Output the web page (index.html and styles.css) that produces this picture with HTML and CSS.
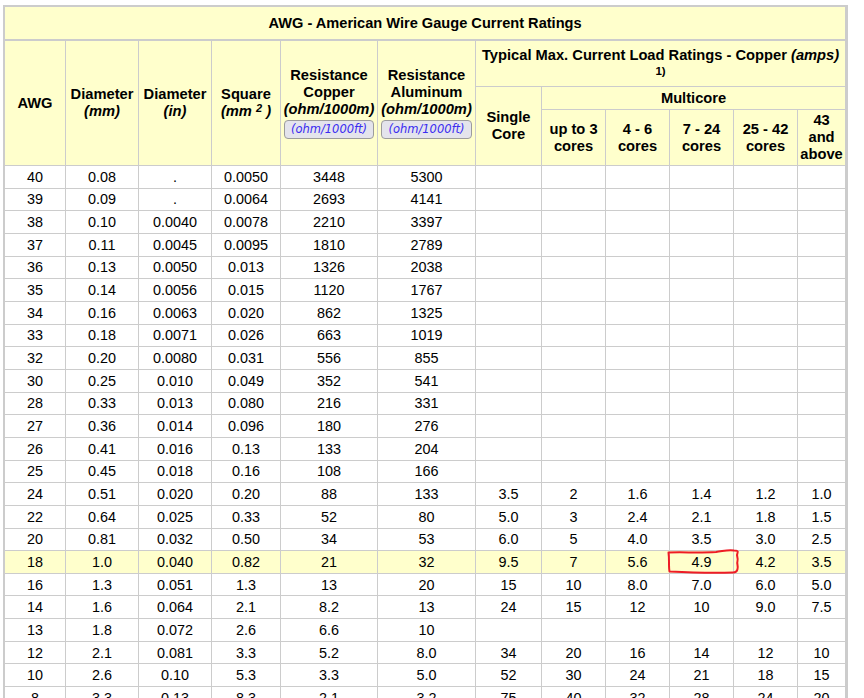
FILE: index.html
```html
<!DOCTYPE html>
<html lang="en">
<head>
<meta charset="utf-8">
<title>AWG - American Wire Gauge Current Ratings</title>
<link rel="stylesheet" href="styles.css">
</head>
<body>
<div class="page">
<table class="awg">
  <colgroup>
    <col class="c1"><col class="c2"><col class="c3"><col class="c4"><col class="c5"><col class="c6">
    <col class="c7"><col class="c8"><col class="c9"><col class="c10"><col class="c11"><col class="c12">
  </colgroup>
  <thead>
    <tr class="r-title"><th colspan="12" class="title">AWG - American Wire Gauge Current Ratings</th></tr>
    <tr class="r-a">
      <th rowspan="3">AWG</th>
      <th rowspan="3">Diameter<br><i>(mm)</i></th>
      <th rowspan="3">Diameter<br><i>(in)</i></th>
      <th rowspan="3">Square<br><i>(mm <sup>2</sup> )</i></th>
      <th rowspan="3">Resistance<br>Copper<br><i>(ohm/1000m)</i><br><span class="unit-btn">(ohm/1000ft)</span></th>
      <th rowspan="3">Resistance<br>Aluminum<br><i>(ohm/1000m)</i><br><span class="unit-btn">(ohm/1000ft)</span></th>
      <th colspan="6">Typical Max. Current Load Ratings - Copper <i>(amps)</i><br><sup class="note">1)</sup></th>
    </tr>
    <tr class="r-b">
      <th rowspan="2">Single<br>Core</th>
      <th colspan="5">Multicore</th>
    </tr>
    <tr class="r-c">
      <th>up to 3<br>cores</th>
      <th>4 - 6<br>cores</th>
      <th>7 - 24<br>cores</th>
      <th>25 - 42<br>cores</th>
      <th>43<br>and<br>above</th>
    </tr>
  </thead>
  <tbody>
    <tr><td>40</td><td>0.08</td><td>.</td><td>0.0050</td><td>3448</td><td>5300</td><td></td><td></td><td></td><td></td><td></td><td></td></tr>
    <tr><td>39</td><td>0.09</td><td>.</td><td>0.0064</td><td>2693</td><td>4141</td><td></td><td></td><td></td><td></td><td></td><td></td></tr>
    <tr><td>38</td><td>0.10</td><td>0.0040</td><td>0.0078</td><td>2210</td><td>3397</td><td></td><td></td><td></td><td></td><td></td><td></td></tr>
    <tr><td>37</td><td>0.11</td><td>0.0045</td><td>0.0095</td><td>1810</td><td>2789</td><td></td><td></td><td></td><td></td><td></td><td></td></tr>
    <tr><td>36</td><td>0.13</td><td>0.0050</td><td>0.013</td><td>1326</td><td>2038</td><td></td><td></td><td></td><td></td><td></td><td></td></tr>
    <tr><td>35</td><td>0.14</td><td>0.0056</td><td>0.015</td><td>1120</td><td>1767</td><td></td><td></td><td></td><td></td><td></td><td></td></tr>
    <tr><td>34</td><td>0.16</td><td>0.0063</td><td>0.020</td><td>862</td><td>1325</td><td></td><td></td><td></td><td></td><td></td><td></td></tr>
    <tr><td>33</td><td>0.18</td><td>0.0071</td><td>0.026</td><td>663</td><td>1019</td><td></td><td></td><td></td><td></td><td></td><td></td></tr>
    <tr><td>32</td><td>0.20</td><td>0.0080</td><td>0.031</td><td>556</td><td>855</td><td></td><td></td><td></td><td></td><td></td><td></td></tr>
    <tr><td>30</td><td>0.25</td><td>0.010</td><td>0.049</td><td>352</td><td>541</td><td></td><td></td><td></td><td></td><td></td><td></td></tr>
    <tr><td>28</td><td>0.33</td><td>0.013</td><td>0.080</td><td>216</td><td>331</td><td></td><td></td><td></td><td></td><td></td><td></td></tr>
    <tr><td>27</td><td>0.36</td><td>0.014</td><td>0.096</td><td>180</td><td>276</td><td></td><td></td><td></td><td></td><td></td><td></td></tr>
    <tr><td>26</td><td>0.41</td><td>0.016</td><td>0.13</td><td>133</td><td>204</td><td></td><td></td><td></td><td></td><td></td><td></td></tr>
    <tr><td>25</td><td>0.45</td><td>0.018</td><td>0.16</td><td>108</td><td>166</td><td></td><td></td><td></td><td></td><td></td><td></td></tr>
    <tr><td>24</td><td>0.51</td><td>0.020</td><td>0.20</td><td>88</td><td>133</td><td>3.5</td><td>2</td><td>1.6</td><td>1.4</td><td>1.2</td><td>1.0</td></tr>
    <tr><td>22</td><td>0.64</td><td>0.025</td><td>0.33</td><td>52</td><td>80</td><td>5.0</td><td>3</td><td>2.4</td><td>2.1</td><td>1.8</td><td>1.5</td></tr>
    <tr><td>20</td><td>0.81</td><td>0.032</td><td>0.50</td><td>34</td><td>53</td><td>6.0</td><td>5</td><td>4.0</td><td>3.5</td><td>3.0</td><td>2.5</td></tr>
    <tr class="hl"><td>18</td><td>1.0</td><td>0.040</td><td>0.82</td><td>21</td><td>32</td><td>9.5</td><td>7</td><td>5.6</td><td>4.9</td><td>4.2</td><td>3.5</td></tr>
    <tr><td>16</td><td>1.3</td><td>0.051</td><td>1.3</td><td>13</td><td>20</td><td>15</td><td>10</td><td>8.0</td><td>7.0</td><td>6.0</td><td>5.0</td></tr>
    <tr><td>14</td><td>1.6</td><td>0.064</td><td>2.1</td><td>8.2</td><td>13</td><td>24</td><td>15</td><td>12</td><td>10</td><td>9.0</td><td>7.5</td></tr>
    <tr><td>13</td><td>1.8</td><td>0.072</td><td>2.6</td><td>6.6</td><td>10</td><td></td><td></td><td></td><td></td><td></td><td></td></tr>
    <tr><td>12</td><td>2.1</td><td>0.081</td><td>3.3</td><td>5.2</td><td>8.0</td><td>34</td><td>20</td><td>16</td><td>14</td><td>12</td><td>10</td></tr>
    <tr><td>10</td><td>2.6</td><td>0.10</td><td>5.3</td><td>3.3</td><td>5.0</td><td>52</td><td>30</td><td>24</td><td>21</td><td>18</td><td>15</td></tr>
    <tr><td>8</td><td>3.3</td><td>0.13</td><td>8.3</td><td>2.1</td><td>3.2</td><td>75</td><td>40</td><td>32</td><td>28</td><td>24</td><td>20</td></tr>
  </tbody>
</table>
<svg class="markup" width="864" height="698" viewBox="0 0 864 698" aria-hidden="true">
  <path d="M668.5,552.5 C684,552 700,553 716,552 C724,551 728,549.5 734,550.5 C737,550.5 738.5,551 737.5,553 C736,556 738.5,558 737.5,561 C736.5,564 738.5,566 737.5,569 C737,571.5 736,572.5 733,572.5 C714,573 690,572.5 669.5,571.5 C668.5,566 669.5,559 668.5,552.5 Z" fill="none" stroke="#ee1c25" stroke-width="2" stroke-linejoin="round"/>
</svg>
</div>
</body>
</html>
```

FILE: styles.css
```css
html, body {
  margin: 0;
  padding: 0;
  background: #fff;
}

.page {
  position: relative;
  padding: 5px 0 0 3px;
  width: 864px;
  height: 698px;
  overflow: hidden;
  box-sizing: border-box;
}

.awg {
  width: 845px;
  table-layout: fixed;
  border-collapse: separate;
  border-spacing: 0;
  border: 2px solid #cccccc;
  font-family: "Liberation Sans", Arial, sans-serif;
  font-size: 14.4px;
  color: #000;
}

.c1 { width: 61px; }
.c2 { width: 73px; }
.c3 { width: 73px; }
.c4 { width: 69px; }
.c5 { width: 97px; }
.c6 { width: 98px; }
.c7 { width: 66px; }
.c8 { width: 64px; }
.c9 { width: 64px; }
.c10 { width: 64px; }
.c11 { width: 64px; }
.c12 { width: 48px; }

.awg th,
.awg td {
  border-right: 1px solid #cccccc;
  border-bottom: 1px solid #cccccc;
  padding: 0;
  text-align: center;
  vertical-align: middle;
  box-sizing: border-box;
}

.awg th {
  background: #ffffcc;
  font-weight: bold;
  font-size: 14.7px;
  line-height: 17px;
}

.awg th i {
  font-style: italic;
}

.awg th.title {
  font-size: 14.6px;
  border-bottom-width: 2px;
}

.awg th sup {
  font-size: 11px;
  line-height: 0;
  vertical-align: 4px;
}

.awg th sup.note {
  font-size: 11.5px;
  vertical-align: 2px;
}

.r-title { height: 34px; }
.r-a { height: 46px; }
.r-b { height: 23px; }
.r-c { height: 56px; }

.awg tbody tr { height: 22.667px; }

.awg td {
  line-height: 16px;
}

.awg tr.hl td {
  background: #ffffcc;
}

.unit-btn {
  display: inline-block;
  margin-top: 2px;
  padding: 2px 6px 2px 6px;
  font-family: "DejaVu Sans", Verdana, sans-serif;
  font-size: 11.5px;
  font-style: italic;
  font-weight: normal;
  line-height: 13px;
  color: #3a2cf0;
  background: #e4e4ec;
  border: 1px solid #9c9c9c;
  border-radius: 4px;
  vertical-align: top;
  white-space: nowrap;
}

.markup {
  position: absolute;
  left: 0;
  top: 0;
  pointer-events: none;
}
```
